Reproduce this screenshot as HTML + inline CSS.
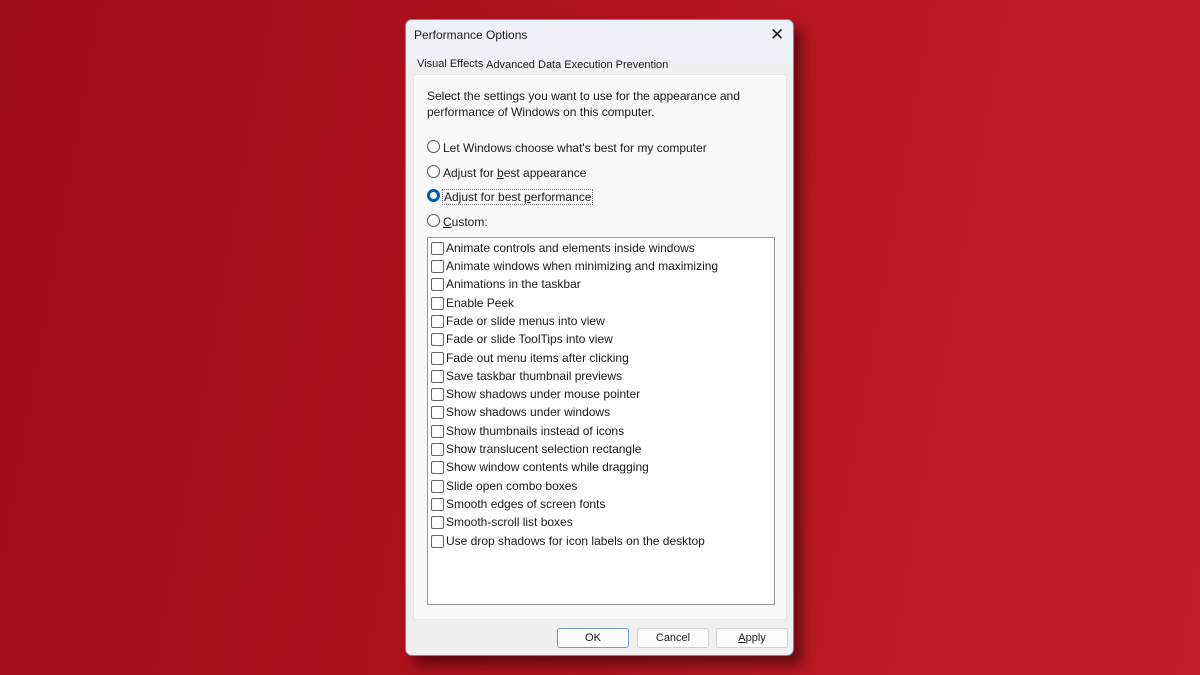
<!DOCTYPE html>
<html><head><meta charset="utf-8"><style>
*{margin:0;padding:0;box-sizing:border-box}
body{width:1200px;height:675px;overflow:hidden;background:linear-gradient(100deg,#9e0c16 0%,#b2141f 50%,#c21f2b 100%);font-family:"Liberation Sans",sans-serif;font-size:12px;color:#1a1a1a;position:relative}
.dlg{position:absolute;left:405px;top:19px;width:389px;height:637px;background:#f0f0f0;border:1px solid #7a8aa8;border-radius:7px;box-shadow:8px 10px 12px rgba(40,0,0,.55);overflow:hidden}
.tb{height:44px;background:#eef1f7}
.title{position:absolute;left:8px;top:8px;font-size:12px}
.x{position:absolute;left:364px;top:5px;font-size:17px;color:#222;font-weight:300}
.tab{position:absolute;top:39px;font-size:11px}
.panel{position:absolute;left:7px;top:54px;width:374px;height:546px;background:#f9f9f9;border:1px solid #e6e6e6}
.t{position:absolute;font-size:12px;white-space:nowrap}
.rad{position:absolute;left:13px;width:13px;height:13px;border:1px solid #555;border-radius:50%;background:#fff}
.rad.on{border:3.5px solid #0058b8}
.list{position:absolute;left:13px;top:162px;width:348px;height:368px;background:#fff;border:1px solid #999}
.cb{position:absolute;left:3px;width:13px;height:13px;border:1px solid #666;border-radius:2px;background:#fff}
.list .t{left:18px}
.btn{position:absolute;top:608px;height:20px;width:72px;background:#fdfdfd;border:1px solid #d0d0d0;border-radius:3px;text-align:center;line-height:18px;font-size:11px}
</style></head><body>
<div class="dlg">
<div class="tb"></div>
<div class="title">Performance Options</div>
<div class="x">✕</div>
<div class="tab" style="left:11px;top:38px">Visual Effects</div>
<div class="tab" style="left:80px">Advanced</div>
<div class="tab" style="left:132px">Data Execution Prevention</div>
<div class="panel">
<div class="t" style="left:13px;top:13px;line-height:16px">Select the settings you want to use for the appearance and<br>performance of Windows on this computer.</div>
<div class="rad" style="top:65px"></div><div class="t" style="left:29px;top:66px">Let Windows choose what's best for my computer</div>
<div class="rad" style="top:90px"></div><div class="t" style="left:29px;top:91px">Adjust for <u>b</u>est appearance</div>
<div class="rad on" style="top:114px"></div><div class="t" style="left:28px;top:114px;border:1px dotted #777;padding:0 1px">Adjust for best <u>p</u>erformance</div>
<div class="rad" style="top:139px"></div><div class="t" style="left:29px;top:140px"><u>C</u>ustom:</div>
<div class="list">
<div class="cb" style="top:4px"></div><div class="t" style="top:3px">Animate controls and elements inside windows</div>
<div class="cb" style="top:22px"></div><div class="t" style="top:21px">Animate windows when minimizing and maximizing</div>
<div class="cb" style="top:40px"></div><div class="t" style="top:39px">Animations in the taskbar</div>
<div class="cb" style="top:59px"></div><div class="t" style="top:58px">Enable Peek</div>
<div class="cb" style="top:77px"></div><div class="t" style="top:76px">Fade or slide menus into view</div>
<div class="cb" style="top:95px"></div><div class="t" style="top:94px">Fade or slide ToolTips into view</div>
<div class="cb" style="top:114px"></div><div class="t" style="top:113px">Fade out menu items after clicking</div>
<div class="cb" style="top:132px"></div><div class="t" style="top:131px">Save taskbar thumbnail previews</div>
<div class="cb" style="top:150px"></div><div class="t" style="top:149px">Show shadows under mouse pointer</div>
<div class="cb" style="top:168px"></div><div class="t" style="top:167px">Show shadows under windows</div>
<div class="cb" style="top:187px"></div><div class="t" style="top:186px">Show thumbnails instead of icons</div>
<div class="cb" style="top:205px"></div><div class="t" style="top:204px">Show translucent selection rectangle</div>
<div class="cb" style="top:223px"></div><div class="t" style="top:222px">Show window contents while dragging</div>
<div class="cb" style="top:242px"></div><div class="t" style="top:241px">Slide open combo boxes</div>
<div class="cb" style="top:260px"></div><div class="t" style="top:259px">Smooth edges of screen fonts</div>
<div class="cb" style="top:278px"></div><div class="t" style="top:277px">Smooth-scroll list boxes</div>
<div class="cb" style="top:297px"></div><div class="t" style="top:296px">Use drop shadows for icon labels on the desktop</div>
</div>
</div>
<div class="btn" style="left:151px;border-color:#6f9bd2">OK</div>
<div class="btn" style="left:231px">Cancel</div>
<div class="btn" style="left:310px"><u>A</u>pply</div>
</div>
</body></html>
